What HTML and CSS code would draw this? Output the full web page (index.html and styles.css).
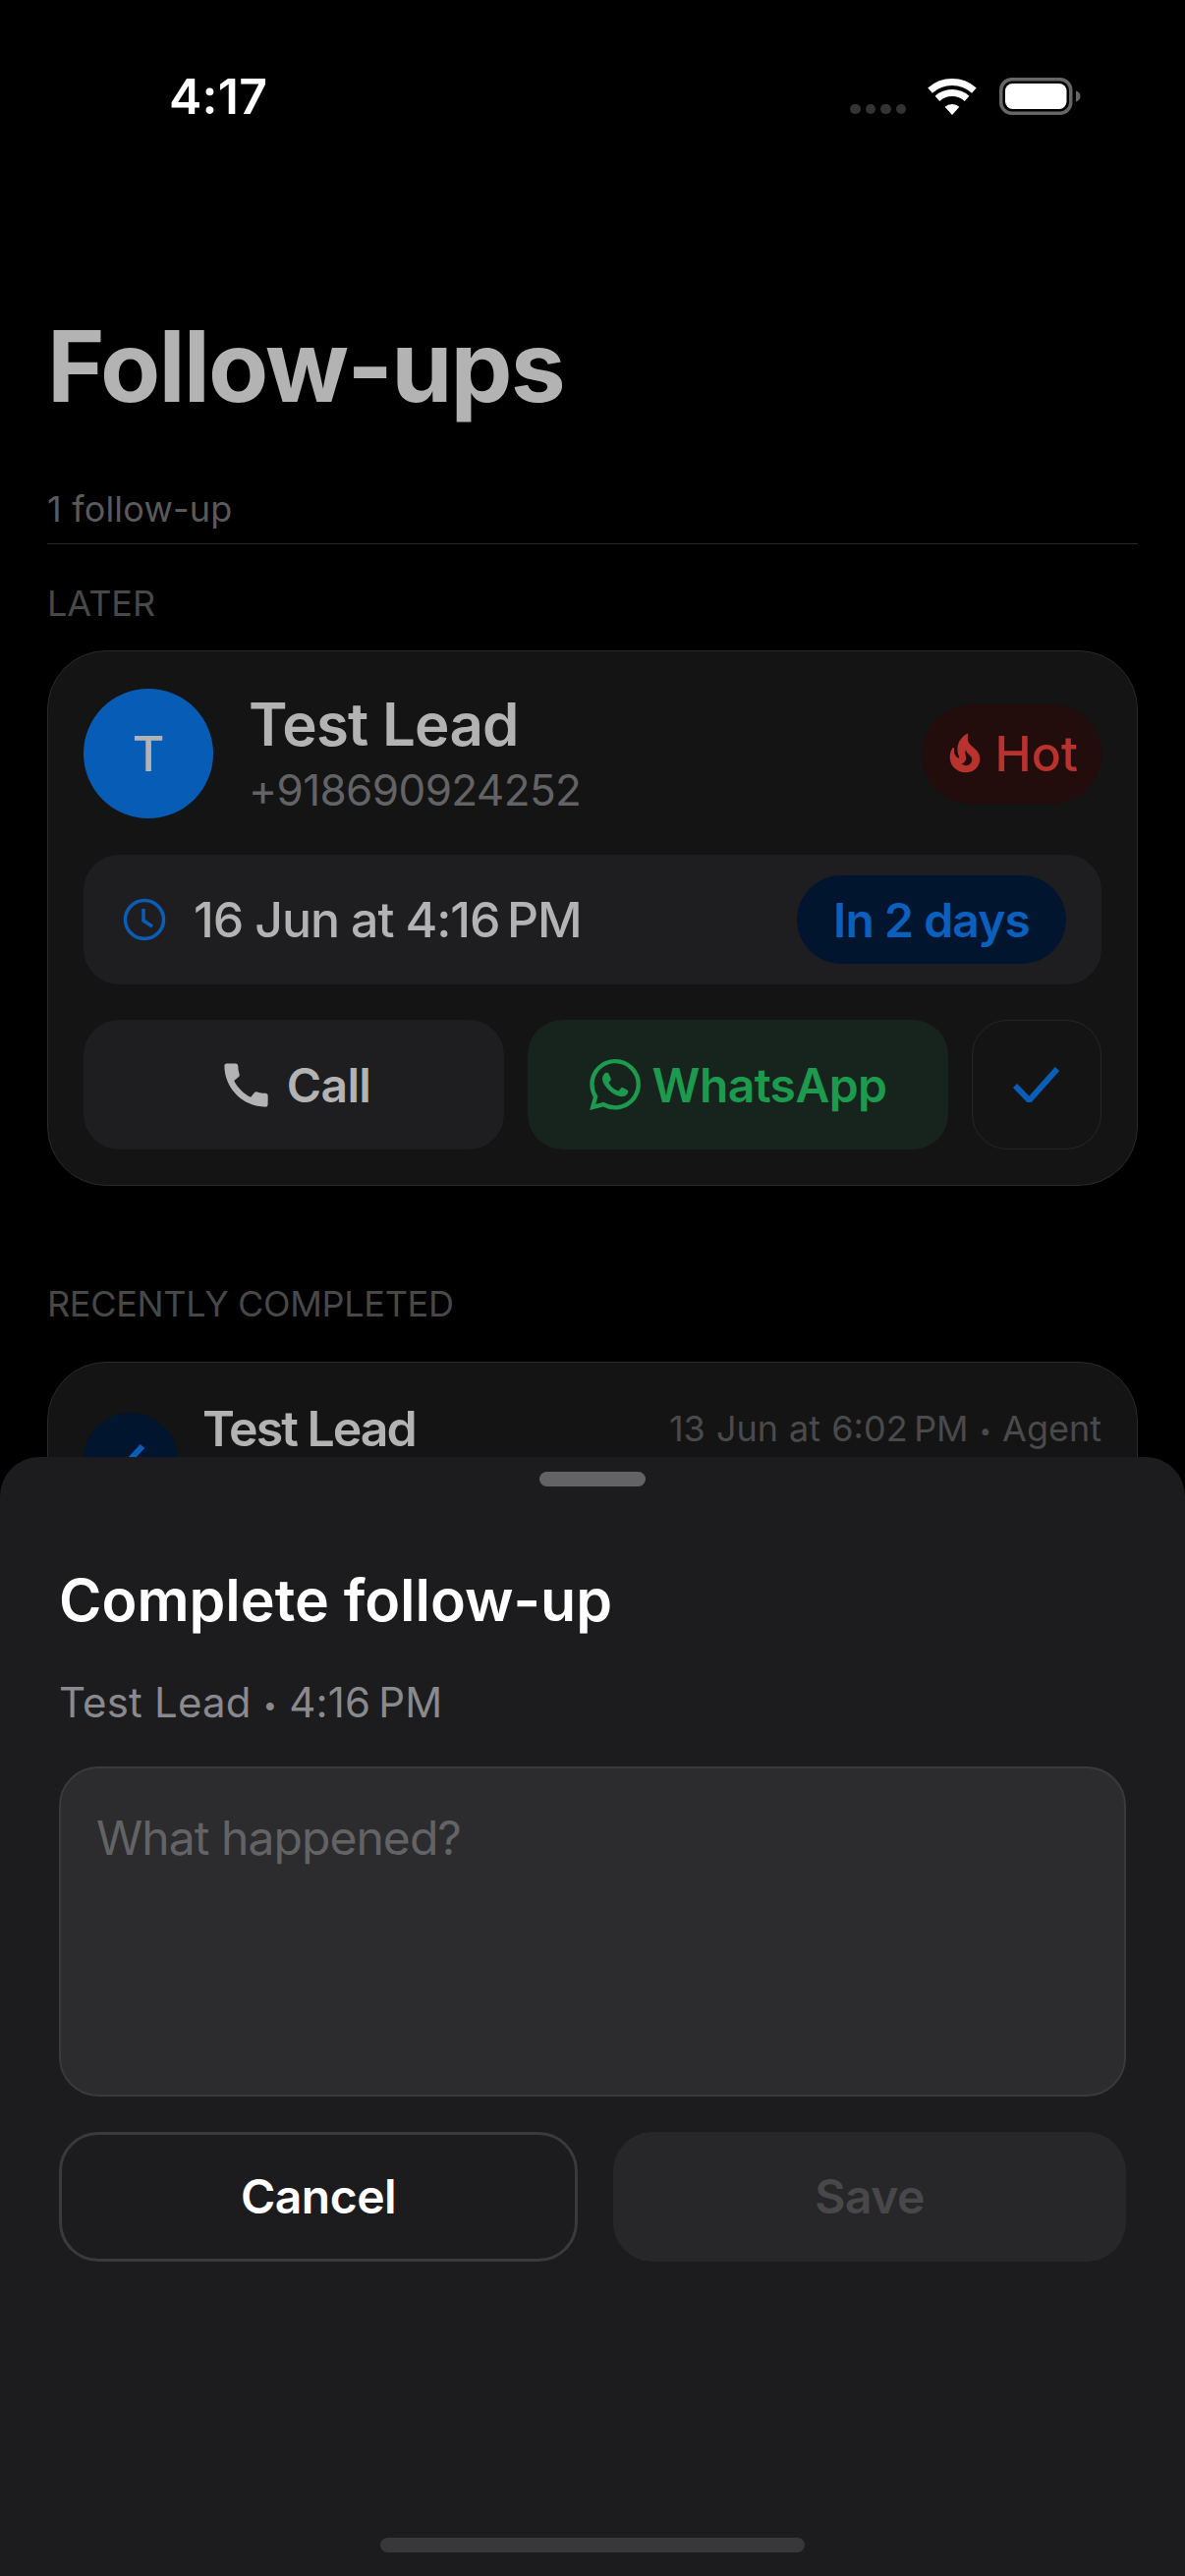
FILE: index.html
```html
<!DOCTYPE html>
<html lang="en">
<head>
<meta charset="utf-8">
<title>Follow-ups</title>
<link rel="stylesheet" href="styles.css">
</head>
<body>
<div class="screen">
  <div class="status">
    <span class="clock">4:17</span>
    <div class="status-icons">
      <div class="signal"><i></i><i></i><i></i><i></i></div>
      <svg class="wifi" viewBox="0 0 50 37" width="50" height="37">
        <path d="M2.6 12.1A33.5 33.5 0 0 1 47.4 12.1" fill="none" stroke="#fff" stroke-width="7"/>
        <path d="M9.94 20.3A22.5 22.5 0 0 1 40.06 20.3" fill="none" stroke="#fff" stroke-width="7"/>
        <path d="M25 37L17.6 28.8A11 11 0 0 1 32.4 28.8Z" fill="#fff"/>
      </svg>
      <svg class="battery" viewBox="0 0 83 38" width="83" height="38">
        <rect x="1.75" y="1.75" width="71" height="34.5" rx="11" fill="none" stroke="#666" stroke-width="3.5"/>
        <rect x="6" y="6" width="62.5" height="26" rx="7.5" fill="#fff"/>
        <path d="M78 13.5c2.800.8 4.500 3 4.500 5.500s-1.700 4.700-4.500 5.500Z" fill="#666"/>
      </svg>
    </div>
  </div>

  <header class="head">
    <h1 class="title">Follow-ups</h1>
    <p class="count">1 follow-up</p>
  </header>

  <main class="list">
    <h2 class="section">LATER</h2>
    <article class="card">
      <div class="lead-row">
        <div class="avatar">T</div>
        <div class="lead-info">
          <div class="lead-name">Test Lead</div>
          <div class="lead-phone">+918690924252</div>
        </div>
        <span class="hot">
          <svg class="hot-icon" viewBox="0 0 24 24" width="46" height="46"><path fill="currentColor" d="M19.480 12.350c-1.570-4.080-7.160-4.300-5.810-10.230.1-.44-.37-.78-.75-.55C9.290 3.710 6.680 8 8.870 13.620c.18.46-.36.89-.75.59-1.810-1.370-2-3.340-1.840-4.750.06-.52-.62-.77-.91-.34C4.690 10.160 4 11.840 4 14.370c.38 5.600 5.110 7.320 6.810 7.540 2.430.31 5.060-.14 6.950-1.870 2.080-1.930 2.840-5.010 1.720-7.690zm-9.280 5.030c1.440-.35 2.180-1.390 2.380-2.310.33-1.430-.96-2.830-.09-5.090.33 1.870 3.270 3.040 3.270 5.080.08 2.530-2.660 4.700-5.560 2.320z"/></svg>
          Hot
        </span>
      </div>
      <div class="when">
        <svg class="when-icon" viewBox="0 0 44 44" width="44" height="44"><circle cx="22" cy="22" r="19.500" fill="none" stroke="currentColor" stroke-width="3.500"/><path d="M21 11v12l9 6" fill="none" stroke="currentColor" stroke-width="3.500"/></svg>
        <span class="when-text">16 Jun at 4:16&#8239;PM</span>
        <span class="due">In 2 days</span>
      </div>
      <div class="actions">
        <button class="action action-call">
          <svg viewBox="0 0 24 24" width="59" height="59"><path fill="currentColor" d="M20.010 15.380c-1.230 0-2.420-.2-3.530-.56-.35-.12-.74-.03-1.010.24l-1.570 1.970c-2.830-1.350-5.480-3.900-6.890-6.830l1.950-1.660c.27-.28.35-.67.24-1.020-.37-1.110-.56-2.300-.56-3.530 0-.54-.45-.99-.99-.99H4.190C3.650 3 3 3.240 3 3.990 3 13.280 10.730 21 20.010 21c.71 0 .99-.63.99-1.180v-3.450c0-.54-.45-.99-.99-.99z"/></svg>
          Call
        </button>
        <button class="action action-whatsapp">
          <svg viewBox="0 0 24 24" width="52" height="52"><path fill="currentColor" d="M17.472 14.382c-.297-.149-1.758-.867-2.030-.967-.273-.099-.471-.148-.67.15-.197.297-.767.966-.94 1.164-.173.199-.347.223-.644.075-.297-.15-1.255-.463-2.390-1.475-.883-.788-1.480-1.761-1.653-2.059-.173-.297-.018-.458.13-.606.134-.133.298-.347.446-.52.149-.174.198-.298.298-.497.099-.198.05-.371-.025-.52-.075-.149-.669-1.612-.916-2.207-.242-.579-.487-.5-.669-.51-.173-.008-.371-.01-.57-.01-.198 0-.52.074-.792.372-.272.297-1.040 1.016-1.040 2.479 0 1.462 1.065 2.875 1.213 3.074.149.198 2.096 3.200 5.077 4.487.709.306 1.262.489 1.694.625.712.227 1.360.195 1.871.118.571-.085 1.758-.719 2.006-1.413.248-.694.248-1.289.173-1.413-.074-.124-.272-.198-.57-.347m-5.421 7.403h-.004a9.870 9.870 0 0 1-5.031-1.378l-.361-.214-3.741.982.998-3.648-.235-.374a9.860 9.860 0 0 1-1.510-5.260c.001-5.450 4.436-9.884 9.888-9.884 2.640 0 5.122 1.030 6.988 2.898a9.825 9.825 0 0 1 2.893 6.994c-.003 5.450-4.437 9.884-9.885 9.884m8.413-18.297A11.815 11.815 0 0 0 12.050 0C5.495 0 .16 5.335.157 11.892c0 2.096.547 4.142 1.588 5.945L.057 24l6.305-1.654a11.882 11.882 0 0 0 5.683 1.448h.005c6.554 0 11.890-5.335 11.893-11.893a11.821 11.821 0 0 0-3.480-8.413z"/></svg>
          WhatsApp
        </button>
        <button class="action-done" aria-label="Mark done">
          <svg viewBox="0 0 48 36" width="48" height="36"><path d="M2 19l14.500 15L45 2" fill="none" stroke="currentColor" stroke-width="6"/></svg>
        </button>
      </div>
    </article>

    <h2 class="section section-done">RECENTLY COMPLETED</h2>
    <article class="card card-done">
      <div class="done-avatar">
        <svg viewBox="0 0 96 96" width="96" height="96"><path d="M26 50l10 10 24-26" fill="none" stroke="currentColor" stroke-width="6"/></svg>
      </div>
      <div class="done-name">Test Lead</div>
      <div class="done-meta">13 Jun at 6:02&#8239;PM <span class="dot">•</span> Agent</div>
    </article>
  </main>

  <section class="sheet">
    <div class="handle"></div>
    <h2 class="sheet-title">Complete follow-up</h2>
    <p class="sheet-sub">Test Lead <span class="dot">•</span> 4:16&#8239;PM</p>
    <textarea class="note" placeholder="What happened?"></textarea>
    <div class="sheet-actions">
      <button class="sheet-btn cancel">Cancel</button>
      <button class="sheet-btn save">Save</button>
    </div>
    <div class="home-bar"></div>
  </section>
</div>
</body>
</html>
```

FILE: styles.css
```css
* { box-sizing: border-box; }

html, body {
  margin: 0;
  padding: 0;
  background: #000;
}

body {
  font-family: Inter, "Liberation Sans", sans-serif;
  -webkit-font-smoothing: antialiased;
}

button, textarea {
  font-family: inherit;
}

.screen {
  position: relative;
  width: 1206px;
  height: 2622px;
  overflow: hidden;
  background: #000;
}

.dot {
  font-size: 0.6em;
  vertical-align: 0.16em;
}

/* Status bar */
.status {
  height: 196px;
  display: flex;
  align-items: center;
  justify-content: space-between;
  padding: 0 106px 0 172px;
}

.clock {
  color: #fff;
  font-size: 50px;
  font-weight: 600;
  line-height: 56px;
  letter-spacing: 0.3px;
}

.status-icons {
  display: flex;
  align-items: flex-end;
  gap: 22px;
}

.signal {
  display: flex;
  gap: 5px;
  padding-bottom: 1px;
}

.signal i {
  width: 10.500px;
  height: 10.500px;
  border-radius: 50%;
  background: #333;
}

.wifi { display: block; }
.battery { display: block; margin-left: 1px; }

/* Page heading */
.head {
  margin: 0 48px;
  padding-top: 117px;
  border-bottom: 1px solid #262626;
}

.title {
  margin: 0;
  color: #b3b3b3;
  font-size: 100px;
  font-weight: 700;
  line-height: 120px;
  letter-spacing: -1.85px;
}

.count {
  margin: 61px 0 0;
  padding-bottom: 11px;
  color: #5a5a5c;
  font-size: 36px;
  line-height: 48px;
  letter-spacing: 0.2px;
}

/* Sections */
.list {
  padding: 38px 48px 0;
}

.section {
  margin: 0 0 26px;
  color: #484848;
  font-size: 36px;
  font-weight: 400;
  line-height: 44px;
}

.section-done {
  margin-top: 98px;
  margin-bottom: 37px;
  letter-spacing: -0.3px;
}

.card {
  display: flex;
  flex-direction: column;
  gap: 36px;
  padding: 38px 36px 36px;
  width: 1110px;
  background: #141414;
  border: 1px solid #2a2a2a;
  border-radius: 60px;
}

.lead-row {
  display: flex;
  align-items: center;
  height: 132px;
  margin-bottom: 1px;
}

.avatar {
  flex: none;
  width: 132px;
  height: 132px;
  display: flex;
  align-items: center;
  justify-content: center;
  border-radius: 50%;
  background: #075db6;
  color: #b3b3b3;
  font-size: 50px;
  font-weight: 500;
}

.lead-info {
  flex: 1;
  padding: 6px 0 0 36px;
}

.lead-name {
  color: #b3b3b3;
  font-size: 60px;
  font-weight: 600;
  line-height: 68px;
  letter-spacing: -0.75px;
}

.lead-phone {
  color: #636366;
  font-size: 44px;
  font-weight: 400;
  line-height: 67px;
  letter-spacing: -0.6px;
}

.hot {
  height: 101px;
  display: flex;
  align-items: center;
  gap: 8px;
  padding: 0 24px 0 21px;
  border-radius: 51px;
  background: #220c0c;
  color: #b8322e;
  font-size: 50px;
  font-weight: 500;
}

.when {
  height: 132px;
  display: flex;
  align-items: center;
  padding: 0 36px 0 40px;
  border-radius: 36px;
  background: #1e1e20;
}

.when-icon {
  flex: none;
  color: #0a5eb8;
}

.when-text {
  flex: 1;
  padding-left: 28px;
  color: #b3b3b3;
  font-size: 50px;
  font-weight: 500;
  letter-spacing: -1.1px;
}

.due {
  height: 90px;
  display: flex;
  align-items: center;
  padding: 0 37px;
  border-radius: 45px;
  background: #01152e;
  color: #0b60be;
  font-size: 48px;
  font-weight: 600;
  letter-spacing: -0.9px;
}

.actions {
  display: flex;
  gap: 24px;
}

.action {
  flex: 1;
  height: 132px;
  display: flex;
  align-items: center;
  justify-content: center;
  gap: 12px;
  border: 0;
  border-radius: 36px;
  font-size: 48px;
  font-weight: 600;
  letter-spacing: -0.6px;
}

.action-call {
  background: #1e1e20;
  color: #b3b3b3;
}

.action-whatsapp {
  background: #17241d;
  color: #1c9a4d;
}

.action-done {
  flex: none;
  width: 132px;
  height: 132px;
  display: flex;
  align-items: center;
  justify-content: center;
  padding: 0;
  background: transparent;
  border: 1px solid #262626;
  border-radius: 36px;
  color: #0a5eb8;
}

/* Completed entry, its lower part sits under the sheet */
.card-done {
  display: grid;
  grid-template-columns: 96px 1fr auto;
  gap: 0 25px;
  height: 300px;
  padding-top: 37px;
  align-content: start;
}

.done-avatar {
  width: 96px;
  height: 96px;
  margin-top: 14px;
  border-radius: 50%;
  background: #01152e;
  color: #0a5eb8;
}

.done-avatar svg { display: block; }

.done-name {
  color: #b3b3b3;
  font-size: 50px;
  font-weight: 600;
  line-height: 60px;
  letter-spacing: -2px;
}

.done-meta {
  color: #4a4a4c;
  font-size: 36px;
  line-height: 60px;
  word-spacing: 1px;
}

/* Bottom sheet */
.sheet {
  position: absolute;
  left: 0;
  right: 0;
  top: 1483px;
  bottom: 0;
  padding: 15px 60px 0;
  background: #1c1c1e;
  border-radius: 40px 40px 0 0;
}

.handle {
  width: 108px;
  height: 15px;
  margin: 0 auto;
  border-radius: 8px;
  background: #636366;
}

.sheet-title {
  margin: 81px 0 0;
  color: #fff;
  font-size: 59px;
  font-weight: 600;
  line-height: 70px;
}

.sheet-sub {
  margin: 39px 0 0;
  color: #8a8a8e;
  font-size: 42px;
  line-height: 60px;
  letter-spacing: 0.2px;
}

.note {
  display: block;
  width: 100%;
  height: 336px;
  margin-top: 33px;
  padding: 41px 36px;
  background: #2c2c2e;
  border: 2px solid #3a3a3c;
  border-radius: 40px;
  color: #fff;
  font-size: 48px;
  line-height: 60px;
  letter-spacing: -0.95px;
  resize: none;
  outline: none;
}

.note::placeholder {
  color: #636366;
  opacity: 1;
}

.sheet-actions {
  display: flex;
  gap: 36px;
  margin-top: 36px;
}

.sheet-btn {
  height: 132px;
  border-radius: 40px;
  font-size: 48px;
  font-weight: 600;
  letter-spacing: -0.5px;
}

.cancel {
  flex: none;
  width: 528px;
  background: transparent;
  border: 3px solid #3a3a3c;
  color: #fff;
}

.save {
  flex: 1;
  background: #272729;
  border: 0;
  color: #48484a;
}

.home-bar {
  position: absolute;
  left: 387px;
  bottom: 24px;
  width: 432px;
  height: 15px;
  border-radius: 8px;
  background: #38383a;
}
```
